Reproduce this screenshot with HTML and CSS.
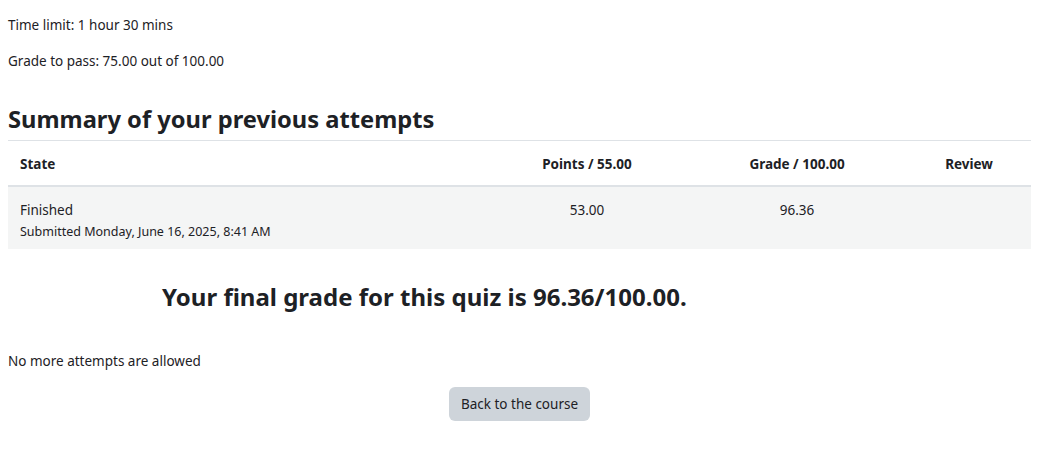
FILE: index.html
```html
<!DOCTYPE html>
<html lang="en">
<head>
<meta charset="utf-8">
<title>Quiz summary</title>
<link rel="stylesheet" href="styles.css">
</head>
<body>
<div class="page">
  <p class="info">Time limit: 1 hour 30 mins</p>
  <p class="info">Grade to pass: 75.00 out of 100.00</p>
  <h2 class="summary-title">Summary of your previous attempts</h2>
  <table class="attempts">
    <thead>
      <tr>
        <th class="c-state">State</th>
        <th class="c-points">Points / 55.00</th>
        <th class="c-grade">Grade / 100.00</th>
        <th class="c-review">Review</th>
      </tr>
    </thead>
    <tbody>
      <tr>
        <td class="c-state">
          <div class="state-main">Finished</div>
          <div class="state-sub">Submitted Monday, June 16, 2025, 8:41 AM</div>
        </td>
        <td class="c-points">53.00</td>
        <td class="c-grade">96.36</td>
        <td class="c-review"></td>
      </tr>
    </tbody>
  </table>
  <h3 class="final-grade">Your final grade for this quiz is 96.36/100.00.</h3>
  <p class="no-more">No more attempts are allowed</p>
  <div class="actions">
    <button class="btn-back" type="button">Back to the course</button>
  </div>
</div>
</body>
</html>
```
FILE: styles.css
```css
html, body {
  margin: 0;
  padding: 0;
  background: #ffffff;
}
body {
  font-family: "Noto Sans", "Open Sans", sans-serif;
  color: #1d2125;
  font-size: 13.5px;
}
.page {
  padding: 15px 19px 0 8px;
}
.info {
  margin: 0 0 16px 0;
  line-height: 20px;
  font-size: 13.5px;
}
.summary-title {
  margin: 34px 0 6px 0;
  font-size: 23.7px;
  line-height: 29px;
  font-weight: 700;
}
.attempts {
  width: 100%;
  border-collapse: collapse;
  table-layout: fixed;
}
.attempts th,
.attempts td {
  box-sizing: border-box;
}
.attempts th {
  height: 45px;
  padding: 2px 12px 0;
  font-size: 13.5px;
  font-weight: 700;
  border-top: 1px solid #dee2e6;
  border-bottom: 2px solid #dee2e6;
  vertical-align: middle;
}
.attempts td {
  background: #f4f5f5;
  height: 63px;
  padding: 12px 12px 0;
  vertical-align: top;
  font-size: 13.5px;
  line-height: 22px;
}
.c-state { width: 479px; text-align: left; }
.c-points { width: 200px; text-align: center; }
.c-grade { width: 220px; text-align: center; }
.c-review { text-align: center; }
.state-main {
  line-height: 22px;
}
.state-sub {
  font-size: 12.5px;
  line-height: 22px;
}
.final-grade {
  margin: 34px 0 0 154px;
  font-size: 24px;
  line-height: 28px;
  font-weight: 700;
}
.no-more {
  margin: 40px 0 0 0;
  line-height: 20px;
  font-size: 13.5px;
}
.actions {
  display: flex;
  justify-content: center;
  margin-top: 16px;
}
.btn-back {
  font-family: inherit;
  font-size: 13.5px;
  color: #1d2125;
  background: #ced4da;
  border: 0;
  border-radius: 6px;
  width: 141px;
  height: 34px;
  padding: 0;
}
```
